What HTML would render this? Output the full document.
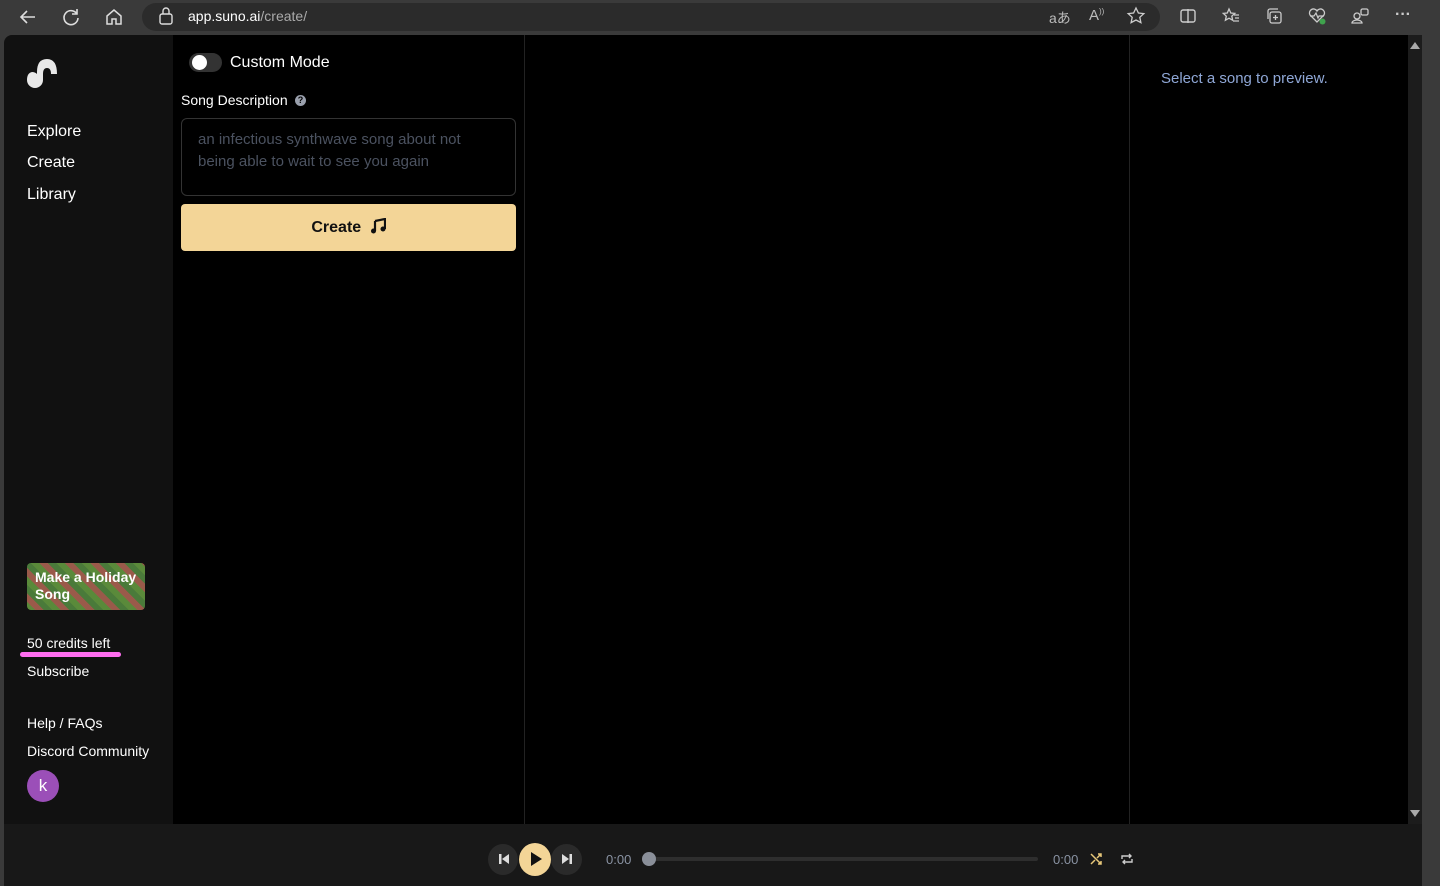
<!DOCTYPE html>
<html><head><meta charset="utf-8"><style>
*{box-sizing:border-box;margin:0;padding:0}
body{width:1440px;height:886px;overflow:hidden;background:#3a3a3a;font-family:"Liberation Sans",sans-serif;position:relative}
.abs{position:absolute}
.url{left:142px;top:3px;width:1018px;height:28px;border-radius:14px;background:#2b2b2b}
.side{left:4px;top:35px;width:169px;height:789px;background:#111;border-top-left-radius:8px}
.main{left:173px;top:35px;width:1235px;height:789px;background:#000}
.nav{color:#fff;font-size:16px;left:27px}
.t{color:#fff}
.ic{position:absolute;top:6px}
</style></head><body>
<div class="abs url"></div>
<svg class="abs" style="left:16px;top:6px" width="24" height="22" viewBox="0 0 24 22"><path d="M19 11H5M11 5l-6 6 6 6" stroke="#ddd" stroke-width="1.6" fill="none"/></svg>
<svg class="abs" style="left:60px;top:6px" width="22" height="22" viewBox="0 0 22 22"><path d="M17 8A7 7 0 1 0 18 12M17 3v5h-5" stroke="#ddd" stroke-width="1.6" fill="none"/></svg>
<svg class="abs" style="left:103px;top:6px" width="22" height="22" viewBox="0 0 22 22"><path d="M4 10l7-6 7 6v8h-5v-5h-4v5H4z" stroke="#ddd" stroke-width="1.5" fill="none"/></svg>
<svg class="abs" style="left:158px;top:7px" width="16" height="18" viewBox="0 0 16 18"><rect x="2" y="7" width="12" height="10" rx="2" stroke="#ddd" fill="none" stroke-width="1.4"/><path d="M5 7V4a3 3 0 0 1 6 0v3" stroke="#ddd" fill="none" stroke-width="1.4"/></svg>
<div class="abs" style="left:188px;top:8px;font-size:14px;color:#fff">app.suno.ai<span style="color:#aaa">/create/</span></div>
<div class="abs" style="left:1049px;top:8px;font-size:14px;color:#bbb">aあ</div>
<div class="abs" style="left:1089px;top:7px;font-size:15px;color:#bbb">A<sup style="font-size:8px">))</sup></div>
<svg class="ic" style="left:1126px" width="20" height="20" viewBox="0 0 20 20"><path d="M10 2l2.4 5 5.4.6-4 3.7 1.1 5.3L10 14l-4.9 2.6 1.1-5.3-4-3.7L7.6 7z" stroke="#ccc" stroke-width="1.3" fill="none"/></svg>
<svg class="ic" style="left:1178px" width="20" height="20" viewBox="0 0 20 20"><rect x="3" y="4" width="14" height="12" rx="2" stroke="#ccc" stroke-width="1.4" fill="none"/><path d="M10 3v14" stroke="#ccc" stroke-width="1.4"/></svg>
<svg class="ic" style="left:1221px" width="20" height="20" viewBox="0 0 20 20"><path d="M8 3l1.8 4 4 .4-3 2.8.9 4L8 12.2 4.4 14.2l.9-4-3-2.8 4-.4z" stroke="#ccc" stroke-width="1.3" fill="none"/><path d="M13 9h5M14 12h4M12 15h6" stroke="#ccc" stroke-width="1.3"/></svg>
<svg class="ic" style="left:1264px" width="20" height="20" viewBox="0 0 20 20"><rect x="6" y="6" width="11" height="11" rx="2" stroke="#ccc" stroke-width="1.3" fill="none"/><path d="M4 13V5a2 2 0 0 1 2-2h8M11.5 9v5M9 11.5h5" stroke="#ccc" stroke-width="1.3" fill="none"/></svg>
<svg class="ic" style="left:1307px" width="20" height="20" viewBox="0 0 20 20"><path d="M10 16L3 9a4 4 0 0 1 7-4 4 4 0 0 1 7 4z" stroke="#ccc" stroke-width="1.3" fill="none"/><path d="M3 10h4l2-3 2 5 1-2h5" stroke="#ccc" stroke-width="1.2" fill="none"/><circle cx="15.5" cy="15.5" r="3" fill="#3fa34d"/></svg>
<svg class="ic" style="left:1350px" width="20" height="20" viewBox="0 0 20 20"><circle cx="7" cy="10" r="3" stroke="#ccc" stroke-width="1.3" fill="none"/><path d="M2 17a5 3 0 0 1 10 0z" stroke="#ccc" stroke-width="1.3" fill="none"/><rect x="11" y="3" width="7" height="6" rx="1.5" stroke="#ccc" stroke-width="1.3" fill="none"/></svg>
<div class="abs" style="left:1395px;top:6px;font-size:16px;color:#ccc;font-weight:bold">···</div>

<div class="abs side"></div>
<div class="abs main"></div>
<div class="abs" style="left:524px;top:35px;width:1px;height:789px;background:#222"></div>
<div class="abs" style="left:1129px;top:35px;width:1px;height:789px;background:#222"></div>
<div class="abs" style="left:1408px;top:35px;width:14px;height:789px;background:#1c1c1c"></div>
<div class="abs" style="left:1410px;top:42px;width:0;height:0;border:5px solid transparent;border-bottom:7px solid #aaa;border-top:0"></div>
<div class="abs" style="left:1410px;top:810px;width:0;height:0;border:5px solid transparent;border-top:7px solid #aaa;border-bottom:0"></div>
<div class="abs" style="left:4px;top:824px;width:1418px;height:62px;background:#181818"></div>

<svg class="abs" style="left:26px;top:58px" width="32" height="32" viewBox="0 0 32 32"><path d="M1 22 A8 8 0 0 0 17 22 L17 16 Q17 10 21 10 Q25 10 25 16 L31 16 Q31 1 21 1 Q11 1 11 14 L11 16 Q9 14 6 14 Q1 15 1 22z" fill="#e8e8e8"/></svg>
<div class="abs nav" style="top:123px">Explore</div>
<div class="abs nav" style="top:154px">Create</div>
<div class="abs nav" style="top:186px">Library</div>

<div class="abs" style="left:27px;top:563px;width:118px;height:47px;border-radius:4px;background:repeating-linear-gradient(45deg,#5a8a3a 0 6px,#9a5a4a 6px 12px,#4a7a3a 12px 18px);padding:6px 8px;color:#fff;font-size:14px;font-weight:bold;line-height:17px">Make a Holiday Song</div>
<div class="abs t" style="left:27px;top:635px;font-size:14px">50 credits left</div>
<div class="abs" style="left:20px;top:652px;width:101px;height:5px;border-radius:3px;background:#ff6ef0"></div>
<div class="abs t" style="left:27px;top:663px;font-size:14px">Subscribe</div>
<div class="abs t" style="left:27px;top:715px;font-size:14px">Help / FAQs</div>
<div class="abs t" style="left:27px;top:743px;font-size:14px">Discord Community</div>
<div class="abs" style="left:27px;top:770px;width:32px;height:32px;border-radius:50%;background:#9b4fb8;color:#fff;font-size:17px;text-align:center;line-height:31px">k</div>

<div class="abs" style="left:189px;top:53px;width:33px;height:19px;border-radius:10px;background:#333"></div>
<div class="abs" style="left:192px;top:55px;width:15px;height:15px;border-radius:50%;background:#fff"></div>
<div class="abs t" style="left:230px;top:54px;font-size:16px">Custom Mode</div>
<div class="abs t" style="left:181px;top:92px;font-size:14px">Song Description</div>
<div class="abs" style="left:295px;top:95px;width:11px;height:11px;border-radius:50%;background:#9aa0ad;color:#000;font-size:9px;font-weight:bold;text-align:center;line-height:11px">?</div>
<div class="abs" style="left:181px;top:118px;width:335px;height:78px;border:1px solid #333;border-radius:6px;padding:10px 16px;color:#4b5260;font-size:15px;line-height:22px">an infectious synthwave song about not being able to wait to see you again</div>
<div class="abs" style="left:181px;top:204px;width:335px;height:47px;border-radius:4px;background:#f3d597;color:#111;font-size:16px;font-weight:bold;text-align:center;line-height:47px">Create
<svg style="vertical-align:-2px;margin-left:4px" width="16" height="16" viewBox="0 0 16 16"><path d="M5 3l10-2v10" stroke="#111" stroke-width="2.2" fill="none"/><path d="M5 3v10" stroke="#111" stroke-width="2.2"/><circle cx="3.5" cy="13" r="2.5" fill="#111"/><circle cx="13" cy="11" r="2.5" fill="#111"/></svg></div>

<div class="abs" style="left:1161px;top:70px;font-size:15px;color:#8fa7d6">Select a song to preview.</div>

<div class="abs" style="left:488px;top:844px;width:30px;height:31px;border-radius:50%;background:#2a2a2a"></div>
<svg class="abs" style="left:497px;top:852px" width="14" height="14" viewBox="0 0 14 14"><rect x="2" y="2" width="2.5" height="10" fill="#ddd"/><path d="M12 2v10L5 7z" fill="#ddd"/></svg>
<div class="abs" style="left:551px;top:844px;width:31px;height:31px;border-radius:50%;background:#2a2a2a"></div>
<svg class="abs" style="left:560px;top:852px" width="14" height="14" viewBox="0 0 14 14"><rect x="9.5" y="2" width="2.5" height="10" fill="#ddd"/><path d="M2 2v10l7-5z" fill="#ddd"/></svg>
<div class="abs" style="left:519px;top:843px;width:32px;height:33px;border-radius:50%;background:#f3d597"></div>
<svg class="abs" style="left:528px;top:851px" width="16" height="16" viewBox="0 0 16 16"><path d="M3 1l11 7-11 7z" fill="#111"/></svg>
<div class="abs" style="left:606px;top:852px;font-size:13px;color:#8a93a3">0:00</div>
<div class="abs" style="left:646px;top:857px;width:392px;height:4px;border-radius:2px;background:#2e2e2e"></div>
<div class="abs" style="left:642px;top:852px;width:14px;height:14px;border-radius:50%;background:#8a8f99"></div>
<div class="abs" style="left:1053px;top:852px;font-size:13px;color:#8a93a3">0:00</div>
<svg class="abs" style="left:1090px;top:853px" width="12" height="12" viewBox="0 0 12 12"><path d="M1 1l10 10M1 11l4-4M7 5l4-4M8 1h3v3M8 11h3V8" stroke="#e8c87a" stroke-width="1.5" fill="none"/></svg>
<svg class="abs" style="left:1121px;top:853px" width="12" height="12" viewBox="0 0 12 12"><path d="M1 6V3h9M8 1l2 2-2 2M11 6v3H2M4 11L2 9l2-2" stroke="#ccc" stroke-width="1.4" fill="none"/></svg>
</body></html>
